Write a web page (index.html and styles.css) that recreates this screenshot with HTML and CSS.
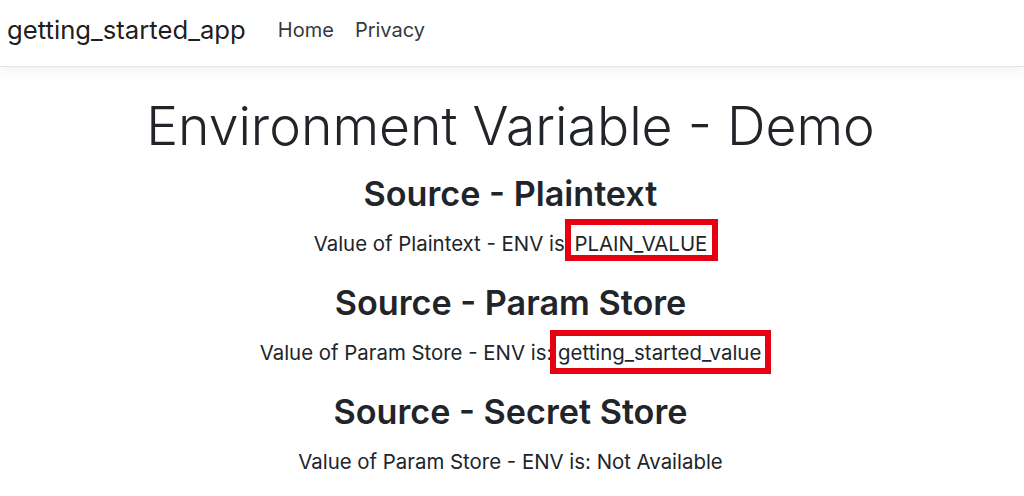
FILE: index.html
```html
<!DOCTYPE html>
<html lang="en">
<head>
<meta charset="utf-8">
<title>getting_started_app</title>
<link rel="stylesheet" href="styles.css">
</head>
<body>
<header class="navbar">
  <a class="brand" href="#">getting_started_app</a>
  <nav class="nav">
    <a class="nav-link" href="#">Home</a>
    <a class="nav-link" href="#">Privacy</a>
  </nav>
</header>
<main class="content">
  <h1 class="display">Environment Variable - Demo</h1>
  <h2 class="source">Source - Plaintext</h2>
  <p class="line">Value of Plaintext - ENV is <span class="mark mark-a">PLAIN_VALUE</span></p>
  <h2 class="source">Source - Param Store</h2>
  <p class="line">Value of Param Store - ENV is: <span class="mark mark-b">getting_started_value</span></p>
  <h2 class="source">Source - Secret Store</h2>
  <p class="line">Value of Param Store - ENV is: Not Available</p>
</main>
</body>
</html>
```

FILE: styles.css
```css
* { box-sizing: border-box; }
html, body { margin: 0; padding: 0; }
body {
  font-family: Inter, "Noto Sans", "Liberation Sans", sans-serif;
  color: #212529;
  background: #fff;
  font-size: 20.4px;
  line-height: 1.5;
}
.navbar {
  display: flex;
  align-items: center;
  height: 67px;
  padding: 0 7px 6px;
  border-bottom: 1px solid #e3e3e8;
  box-shadow: 0 4px 12px rgba(0,0,0,0.05);
}
.brand {
  font-size: 25.7px;
  color: rgba(0,0,0,0.9);
  text-decoration: none;
  margin-right: 24px;
}
.nav { display: flex; gap: 5px; }
.nav-link {
  font-size: 20px;
  line-height: 30px;
  color: #343a40;
  text-decoration: none;
  padding: 0 8px;
}
.content {
  text-align: center;
  padding: 26.5px 3px 0 0;
}
.display {
  font-size: 53.5px;
  font-weight: 300;
  line-height: 1.2;
  margin: 0 0 15px;
}
.source {
  font-size: 34.2px;
  font-weight: 600;
  line-height: 41.4px;
  margin: 0 0 15px;
}
.line {
  line-height: 30.75px;
  margin: 0 0 21.8px;
}
.mark {
  position: relative;
}
.mark-a {
  margin-left: 4px;
}
.mark::after {
  content: "";
  position: absolute;
  border: 6px solid #e60012;
  pointer-events: none;
}
.mark-a::after {
  left: -9px;
  right: -11px;
  top: -12px;
  bottom: -5px;
}
.mark-b::after {
  left: -8px;
  right: -10px;
  top: -10px;
  bottom: -9px;
}
```
